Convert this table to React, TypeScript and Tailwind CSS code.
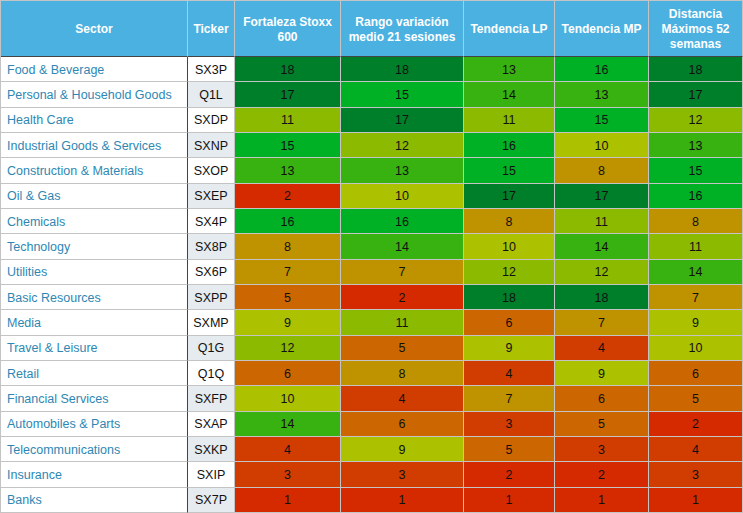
import React from "react";

const rows: [string, string, number[]][] = [
  ["Food & Beverage", "SX3P", [18, 18, 13, 16, 18]],
  ["Personal & Household Goods", "Q1L", [17, 15, 14, 13, 17]],
  ["Health Care", "SXDP", [11, 17, 11, 15, 12]],
  ["Industrial Goods & Services", "SXNP", [15, 12, 16, 10, 13]],
  ["Construction & Materials", "SXOP", [13, 13, 15, 8, 15]],
  ["Oil & Gas", "SXEP", [2, 10, 17, 17, 16]],
  ["Chemicals", "SX4P", [16, 16, 8, 11, 8]],
  ["Technology", "SX8P", [8, 14, 10, 14, 11]],
  ["Utilities", "SX6P", [7, 7, 12, 12, 14]],
  ["Basic Resources", "SXPP", [5, 2, 18, 18, 7]],
  ["Media", "SXMP", [9, 11, 6, 7, 9]],
  ["Travel & Leisure", "Q1G", [12, 5, 9, 4, 10]],
  ["Retail", "Q1Q", [6, 8, 4, 9, 6]],
  ["Financial Services", "SXFP", [10, 4, 7, 6, 5]],
  ["Automobiles & Parts", "SXAP", [14, 6, 3, 5, 2]],
  ["Telecommunications", "SXKP", [4, 9, 5, 3, 4]],
  ["Insurance", "SXIP", [3, 3, 2, 2, 3]],
  ["Banks", "SX7P", [1, 1, 1, 1, 1]],
];

const colors: Record<number, string> = {
  18: "bg-[#007f2a]",
  17: "bg-[#007f2a]",
  16: "bg-[#00b125]",
  15: "bg-[#00b125]",
  14: "bg-[#37b210]",
  13: "bg-[#37b210]",
  12: "bg-[#8bba00]",
  11: "bg-[#8bba00]",
  10: "bg-[#acc100]",
  9: "bg-[#acc100]",
  8: "bg-[#bf9200]",
  7: "bg-[#bf9200]",
  6: "bg-[#cc6600]",
  5: "bg-[#cc6600]",
  4: "bg-[#d13d00]",
  3: "bg-[#d13d00]",
  2: "bg-[#d52900]",
  1: "bg-[#d52900]",
};

const headers = [
  "Fortaleza Stoxx 600",
  "Rango variación medio 21 sesiones",
  "Tendencia LP",
  "Tendencia MP",
  "Distancia Máximos 52 semanas",
];

export default function App() {
  const head =
    "flex items-center justify-center text-center bg-[#4ab1e1] text-white font-bold text-[12px] leading-[15px] border-r border-r-[#c4c4c4] border-b border-b-[#444444] px-1 pt-[2px]";
  return (
    <div
      className="w-[743px] h-[513px] bg-white"
      style={{ fontFamily: '"Liberation Sans", Arial, Helvetica, sans-serif' }}
    >
      <div className="grid h-[513px] w-[743px] grid-cols-[187px_47px_106px_123px_91px_94px_94px] grid-rows-[56px_repeat(18,minmax(0,1fr))] border-l border-t border-[#c4c4c4]">
        <div className={head}>Sector</div>
        <div className={head}>Ticker</div>
        {headers.map((h) => (
          <div key={h} className={head}>
            {h}
          </div>
        ))}
        {rows.map(([name, ticker, vals], i) => (
          <React.Fragment key={name}>
            <div className="flex items-center pl-[6px] pt-[2px] text-[12.5px] text-[#2e87b3] border-b border-b-[#c4c4c4] border-r border-r-[#444444] bg-white">
              {name}
            </div>
            <div
              className={`flex items-center justify-center pt-[2px] text-[12.5px] text-[#111111] border-b border-r border-[#c4c4c4] ${
                i % 2 === 1 ? "bg-[#e5ebee]" : "bg-white"
              }`}
            >
              {ticker}
            </div>
            {vals.map((v, j) => (
              <div
                key={j}
                className={`flex items-center justify-center pt-[2px] text-[12.5px] text-[#111111] border-b border-r border-[#c4c4c4] ${colors[v]}`}
              >
                {v}
              </div>
            ))}
          </React.Fragment>
        ))}
      </div>
    </div>
  );
}
